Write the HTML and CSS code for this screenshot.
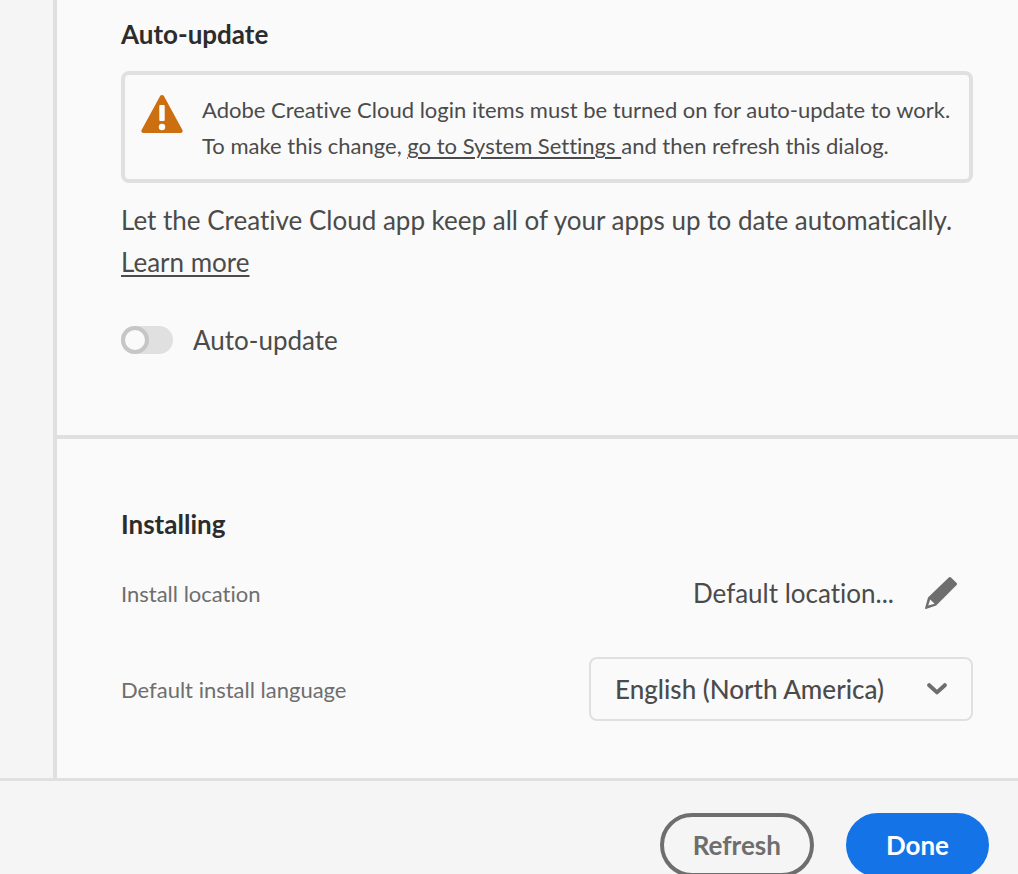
FILE: index.html
```html
<!DOCTYPE html>
<html lang="en">

<head>
    <meta charset="UTF-8" />
    <meta name="viewport" content="width=device-width, initial-scale=1.0" />
    <title>Creative Cloud Preferences</title>
    <link rel="stylesheet" href="styles.css">
</head>

<body>
    <div class="dialog">
        <aside class="sidebar"></aside>
        <main class="content">
            <section class="section updates">
                <h2>Auto-update</h2>
                <div class="alert" role="alert">
                    <svg class="alert-icon" viewBox="0 0 42 38" aria-hidden="true">
                        <path fill="#cb6f10" d="M19.1 1.1 a2.2 2.2 0 0 1 3.8 0 L41.4 34.9 a2 2 0 0 1 -1.8 3 H2.4 a2 2 0 0 1 -1.8 -3 Z" />
                        <rect x="18.3" y="10" width="5.4" height="16" rx="1" fill="#fff" />
                        <circle cx="21" cy="32" r="3.2" fill="#fff" />
                    </svg>
                    <p>Adobe Creative Cloud login items must be turned on for auto-update to work. To make this change, <a href="#">go to System Settings </a>and then refresh this dialog.</p>
                </div>
                <p class="description">Let the Creative Cloud app keep all of your apps up to date automatically. <a href="#">Learn more</a></p>
                <label class="switch">
                    <input type="checkbox" role="switch">
                    <span>Auto-update</span>
                </label>
            </section>

            <section class="section installing">
                <h2>Installing</h2>
                <div class="row">
                    <span class="row-label">Install location</span>
                    <div class="location">
                        <span>Default location...</span>
                        <button class="edit-btn" aria-label="Edit install location">
                            <svg viewBox="0 0 32 32" aria-hidden="true">
                                <path fill="#6e6e6e" fill-rule="evenodd" d="M23.8 .6 a1.6 1.6 0 0 1 2.2 0 L31.6 6 a1.5 1.5 0 0 1 0 2.1 L11.2 28.6 L1 31.9 a.7 .7 0 0 1 -.9 -.9 L3 20.6 Z M5.2 22.4 L3.2 28.4 L9.6 26.8 Z" />
                            </svg>
                        </button>
                    </div>
                </div>
                <div class="row">
                    <label class="row-label" for="language">Default install language</label>
                    <div class="picker">
                        <select id="language">
                            <option>English (North America)</option>
                        </select>
                        <svg class="chevron" viewBox="0 0 20 12" aria-hidden="true">
                            <path d="M2.2 2.2 L10 9.4 L17.8 2.2" fill="none" stroke="#6e6e6e" stroke-width="4" stroke-linecap="round" stroke-linejoin="round" />
                        </svg>
                    </div>
                </div>
            </section>
        </main>
    </div>
    <footer class="footer">
        <button class="btn">Refresh</button>
        <button class="btn primary">Done</button>
    </footer>
</body>

</html>
```

FILE: styles.css
```css
:root {
    --background: #fafafa;
    --panel: #f5f5f5;
    --border: #e0e0e0;
    --text: #4b4b4b;
    --heading: #2c2c2c;
    --gray: #6e6e6e;
    --primary: #1473e6;
}

*,
*::before {
    margin: 0;
    padding: 0;
    box-sizing: border-box;
    font-family: Lato, 'Open Sans', sans-serif;
}

body {
    height: 100vh;
    display: flex;
    flex-direction: column;
    overflow: hidden;
    background: var(--panel);
    color: var(--text);
    font-size: 26px;
    font-variant-ligatures: none;
}

a {
    color: inherit;
    text-decoration-thickness: 2px;
    text-underline-offset: 3px;
}

.dialog {
    flex: none;
    display: flex;
}

.sidebar {
    width: 57px;
    border-right: 4px solid var(--border);
}

.content {
    flex: 1;
    background: var(--background);
}

.section {
    padding: 0 45px 0 64px;
}

.updates {
    padding-top: 16px;
    padding-bottom: 76px;
    border-bottom: 4px solid var(--border);
}

h2 {
    font-size: 26px;
    line-height: 36px;
    font-weight: 700;
    color: var(--heading);
}

.alert {
    display: flex;
    gap: 19px;
    margin-top: 19px;
    padding: 17px 0 15px 16px;
    border: 4px solid var(--border);
    border-radius: 8px;
    font-size: 22px;
    line-height: 36px;
}

.alert-icon {
    flex: none;
    width: 42px;
    height: 38px;
    margin-top: 3px;
}

.description {
    margin-top: 16px;
    line-height: 42px;
}

.switch {
    display: flex;
    align-items: center;
    gap: 20px;
    margin-top: 38px;
    line-height: 38px;
}

.switch input {
    appearance: none;
    display: flex;
    width: 52px;
    height: 28px;
    border-radius: 14px;
    background: var(--border);
}

.switch input::before {
    content: '';
    width: 28px;
    height: 28px;
    border: 4px solid #c6c6c6;
    border-radius: 50%;
    background: var(--background);
}

.switch input:checked {
    background: var(--primary);
    justify-content: flex-end;
}

.installing {
    padding-top: 67px;
    padding-bottom: 57px;
}

.row {
    display: flex;
    align-items: center;
    justify-content: space-between;
    height: 64px;
}

h2 + .row {
    margin-top: 19px;
    margin-bottom: 32px;
}

.row-label {
    font-size: 22px;
    color: var(--gray);
}

.location {
    display: flex;
    align-items: center;
    gap: 31px;
    padding-right: 16px;
}

.edit-btn {
    width: 32px;
    height: 32px;
    border: none;
    background: none;
    cursor: pointer;
}

.edit-btn svg {
    display: block;
}

.picker {
    position: relative;
    width: 384px;
}

.picker select {
    appearance: none;
    width: 100%;
    height: 64px;
    padding: 0 64px 0 24px;
    border: 2px solid var(--border);
    border-radius: 8px;
    background: transparent;
    color: var(--text);
    font-size: 26px;
    font-weight: 500;
}

.chevron {
    position: absolute;
    top: 26px;
    right: 26px;
    width: 20px;
    height: 12px;
    pointer-events: none;
}

.footer {
    flex: none;
    display: flex;
    justify-content: flex-end;
    gap: 32px;
    padding: 32px 29px;
    border-top: 3px solid var(--border);
}

.btn {
    height: 64px;
    padding: 0 29px;
    border: 4px solid var(--gray);
    border-radius: 32px;
    background: transparent;
    color: var(--gray);
    font-size: 26px;
    font-weight: 700;
    cursor: pointer;
}

.btn.primary {
    padding: 0 36px;
    border-color: var(--primary);
    background: var(--primary);
    color: #fff;
}
```
